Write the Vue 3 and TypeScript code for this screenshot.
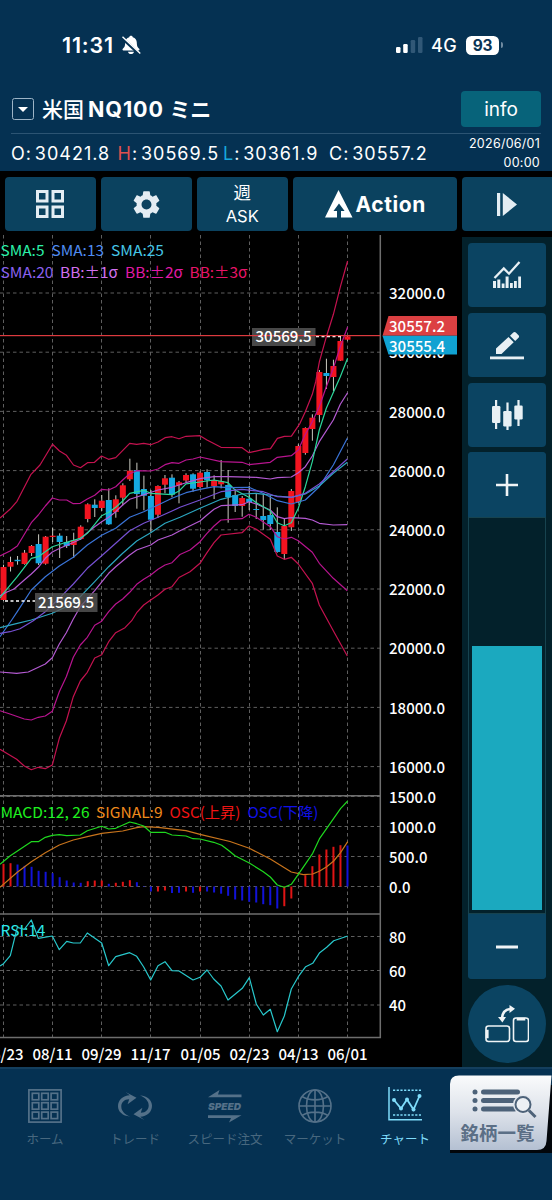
<script setup lang="ts">
type Candle = [up: 0 | 1, high: number, top: number, bottom: number, low: number]
interface Legend { text: string; x: number; y: number; w: number; color: string }

const STEP = 7.02
const xAt = (i: number): number => 3.5 + i * STEP

const candles: Candle[] = [
  [1, 564.7, 567, 600, 601], [1, 556.7, 562, 566.7, 571.5], [0, 556, 559.8, 561.2, 564.7], [1, 550, 552.7, 564, 564.7],
  [1, 545, 546, 553, 556], [0, 534.3, 544, 563.3, 565], [1, 536, 536.7, 563.7, 564.7], [1, 527.7, 535.7, 537, 542],
  [0, 533.3, 535.7, 542, 558], [0, 536, 542, 546, 548], [1, 532.7, 540, 545, 558], [1, 525.3, 526.7, 539, 540],
  [1, 503.3, 504.3, 519, 522.3], [0, 499.3, 504.7, 508, 517], [1, 495, 500.7, 508, 511], [0, 488.3, 500, 524.3, 525],
  [1, 495.3, 499.3, 512, 517.7], [1, 483.3, 485.3, 497.7, 505.3], [1, 458.7, 470.7, 479.3, 481], [0, 462.7, 470, 494, 508.7],
  [0, 475.7, 489, 495.7, 510.3], [0, 490, 496, 519.7, 532.7], [1, 485.3, 486, 514.7, 518], [1, 475, 478.3, 484.7, 493.3],
  [0, 474.3, 477.7, 494.7, 497.3], [1, 481, 482.3, 485.3, 503.3], [1, 473.3, 475, 480.5, 482.7], [0, 473.3, 474.3, 488.7, 491.7],
  [1, 471.3, 472.7, 487, 488.3], [0, 469.3, 472, 480.3, 487.7], [1, 475.3, 480, 486, 499], [1, 460, 481, 484.3, 488.3],
  [0, 470, 485, 497, 522.7], [0, 489, 495, 506, 512], [1, 496, 498, 506, 516.7], [0, 486, 498.7, 502, 510],
  [0, 494, 509, 510, 519], [0, 494.3, 516, 520, 529.7], [0, 495.3, 515, 524, 530], [0, 507.3, 532, 552, 552.7],
  [1, 518.3, 526, 554, 559.3], [1, 489, 491, 527.3, 531], [1, 444.3, 446, 502, 502.7], [1, 427.3, 428, 453, 454.7],
  [1, 414.3, 417.7, 429, 440.7], [1, 370, 372, 415, 422.3], [0, 358.7, 373, 376, 389], [1, 359.7, 366, 377, 391],
  [1, 336.3, 341, 360.7, 361], [1, 335.7, 336.3, 339.7, 340.7],
]

const curves: { color: string; points: string }[] = [
  { color: '#c4124f', points: '0,518 10,509.3 17,501.3 31,474.3 40,465 52.5,444.3 59.5,451 66.5,455.3 73.5,465 80.5,467.7 87.5,462.7 94.5,462.3 101.5,456 108.5,459.3 115.7,457.7 129.7,443.3 136.7,444.3 143.7,443.3 150.7,444.7 158,442 165,437.7 172,436.7 179,438.8 186,436.3 200,435.7 207,440 221,447.3 242,447.7 249,452.7 263.5,449.3 270.5,448.7 277.4,438.3 284.4,436.3 291.4,436.2 300,423.3 305.3,411.7 312.3,394.3 315.7,381.7 319.4,361.7 326.4,336.7 333.4,314.3 340.4,286.7 347.6,261' },
  { color: '#c4124f', points: '0,749.3 16.7,759.3 24.3,766 31.3,769.7 38.3,767.3 45.3,768.7 52.3,765 59.3,738.3 66.3,721 73.3,696.7 80.3,681 87.3,672.3 94.7,658 101.7,654.7 108.7,641.7 115.7,632.7 125,627.7 131.7,620.7 136.7,612.7 143.7,605 150.7,600 158,595 165,589.3 172,586.7 179,577.5 190,571.7 200,563.3 207,552.7 214,542.7 221,535 242,532.7 249,526 256.3,529.3 270.3,539.3 277.3,556 284.3,559.3 291.3,557.3 298.3,564 312.3,583.3 319.3,605 333.3,630.7 347.3,656' },
  { color: '#b8148f', points: '0,556 10,551 17.3,546 31.3,522.7 38.3,515 45.3,506 52.3,498 59.3,500 66.7,500 73.3,503.7 80.3,503.3 87.3,499 94.7,495.3 101.7,489.3 108.7,490 115.7,486.7 122.7,480 129.7,473.7 136.7,470.7 150.7,471 158,469 165,464.7 172,462.7 179,463.3 186,460 193,459 200,457 221,461.7 242,462.3 249,464.7 270.3,462.3 277.3,457.3 291.3,455.7 298.3,450 305,435 312.3,421.7 319.3,406.7 326.3,386.7 333.3,368.3 340.3,346.7 347.6,327' },
  { color: '#b8148f', points: '0,710.7 10,714 24.3,719 31.3,720 38.3,717.3 45.3,716 52.3,711.3 59.3,691.7 66.3,676.7 73.3,657.3 80.3,645 87.3,637.3 94.7,625.3 101.7,621.2 108.7,611.7 115.7,604 122.7,599 129.7,592.3 136.7,584.3 143.7,579.3 150.7,575 158,569.3 165,565 172,562.7 180,554.5 190,550 200,541.7 207,533.3 214,526 221,520 242,518.7 249,514.3 256.3,517.3 270.3,526.7 277.3,536.7 284.3,539 291.3,537.3 298.3,540.7 312.3,552.3 319.3,563.3 333.3,578.3 347.3,590.7' },
  { color: '#b45ad2', points: '0,595.7 7,592 14,589 24.3,580 31.3,574 38.3,567.3 45.3,558.3 52.3,552 59.3,548.5 66.3,545.5 73.3,542.5 80.3,539.3 87.3,532.7 94.7,526.7 101.7,521.7 108.7,517.3 115.7,511.7 122.7,505 129.7,499.3 143.7,494.7 158,490 172,487.3 186,482.7 193,480.7 200,478.7 214,476.7 228,476.7 256.3,477.3 270.3,479 277.3,477.7 291.3,477 298.3,472.7 305.3,466.7 312.3,456 319.3,441.7 333.3,420 340.3,404.3 347.6,392.7' },
  { color: '#b45ad2', points: '0,672 16.7,673.3 28.3,672 45.3,664 52.3,657.7 59.3,644 66.3,632.7 73.3,619 80.3,606.7 94.7,590.7 108.7,573.3 115.7,566.7 129.7,555 136.7,550 150.7,545 158,540 172,535 180,530.7 200,521 207,515 214,509.3 221,505.7 242,504.7 249,501.7 256.3,504 270.3,510 277.3,516.7 284.3,518.7 291.3,517.7 305.3,518.3 312.3,520 319.3,523.3 333.3,525 347.3,524.7' },
  { color: '#2bd69a', points: '0,598 3.3,593.3 17.3,576.7 31.3,558.3 38.3,556.7 52.3,546.7 66.3,542.3 80.3,538.3 87.3,533.3 94.7,524.3 101.7,515.7 108.7,512.3 115.7,507.3 122.7,501 129.7,493.3 143.7,490.3 150.7,493.3 172,494.7 179,491 186,483.8 200,482 214,480 228,482.7 235,490 249,497.3 256.3,502.7 270.3,510.7 277.3,522.7 284.3,525.7 291.3,522.7 298.3,508.3 305.3,486.7 312.3,461.7 319.3,430 326.3,408.3 340.3,376.7 347.6,358.3' },
  { color: '#3a74d8', points: '0,636.7 11.7,620 17.3,611.7 31.3,590 45.3,576.7 59.3,566 73.3,557.3 87.3,545 101.7,535.3 115.7,528.3 129.7,517.3 143.7,511.7 158,505 172,498.3 186,492.7 200,489.3 214,486.7 228,487.7 249,487.3 263,493.3 277.3,500.7 291.3,504 305.3,500 319.3,486.7 333.3,465 347.3,438.3' },
  { color: '#2ba6c0', points: '0,627.7 17.3,623.3 31.3,620 52.3,613.3 66.3,606.7 80.3,596.7 94.7,581.7 108.7,566.7 122.7,553.3 136.7,541 150.7,532.7 165,523.3 180,517.3 200,508.3 221,499.3 242,494 256.3,493.3 277.3,496 291.3,497.3 305.3,494 319.3,486 333.3,473.3 347.3,462.3' },
  { color: '#7650d2', points: '0,633.3 10,631.7 20,628.7 33.3,620.7 45.3,611.7 59.3,598.3 73.3,584 87.3,568.3 101.7,555.7 115.7,543.3 129.7,530.7 143.7,523.3 158,517.3 172,511 180,507.3 200,500 221,491.7 242,489.3 263.3,491.7 277.3,496.7 291.3,497.3 305.3,493.3 319.3,484 333.3,471.7 347.3,459' },
]

const macd = '0,864.3 10.3,855.7 31.3,841.7 38.3,841.7 45.3,837.3 52.3,835.3 59.3,834.7 66.7,835.7 80.3,835 87.3,830.7 101.7,826.3 108.7,829 115.7,828.3 129.7,822 136.7,823.7 143.7,826 150.7,832.3 165,832.3 172,835 186,836 193,838.7 200,839 213.7,842.3 221.7,845.3 228,850 235,855.7 249.3,863 263.3,871.7 270.3,877 277.3,885 284.3,887.3 291.3,884.3 298.3,874.3 312.7,853.3 319.7,838.3 326.7,828.3 340.7,808.3 347.7,801'
const signal = '0,887.3 17.3,872.3 31.3,861.7 45.3,852.7 59.3,845 73.3,840 87.3,836.7 101.7,833.3 122.7,831 136.7,827.7 143.7,826.7 158,827.3 186,830.7 200,834.3 230,841.5 249.3,848.3 270.3,859 291.3,872 303.3,874.7 312.7,874 319.7,871 326.7,866.7 333.7,861 340.7,852.3 347.7,841.7'
const rsi = '0,966 3.5,963.7 10.3,955.7 15,936.7 17.3,927.3 24.3,929.3 31.3,920 38.3,938.3 52.3,936 59.3,949.7 66.7,941.3 73.3,943 80.3,943 87.3,933 101.7,943 108.7,965.7 115.7,956.7 129.7,952.7 136.7,956.3 143.7,967 150.7,980 158,965.7 165,961.7 172,970.7 179,971 193,980 200,977.3 207,970 213.7,979 221,986 228,1000 242.3,988.3 249.3,977.7 256.3,1004 263.3,1015 270.3,1009.3 277.3,1031.7 284.3,1016 291.3,989 298.3,976.7 305.7,966.7 312.7,963.3 319.7,952.7 326.7,947.3 333.7,940.7 347.7,936'

const oscillator: [rising: 0 | 1, value: number][] = [
  [1, 22.7], [1, 23.3], [0, 22], [0, 20.7], [0, 19.7], [0, 15.7], [0, 14.7], [0, 13.3], [0, 9.3], [0, 6],
  [0, 4], [0, 3.7], [1, 5.3], [1, 6], [1, 6], [0, 2.7], [1, 3.7], [1, 4.7], [1, 6.3], [0, 4.3],
  [0, 0.5], [0, -5], [1, -5], [1, -4], [0, -6.5], [0, -6.3], [1, -5], [0, -6.3], [1, -5], [0, -5],
  [0, -6], [0, -7.2], [0, -9.3], [0, -13], [0, -14], [0, -15.3], [0, -16], [0, -17.7], [0, -18.7], [0, -22],
  [1, -19.7], [1, -12], [1, 0], [1, 11.3], [1, 20.3], [1, 32], [1, 37], [1, 39.7], [1, 41.3], [0, 41],
]

const gridX = [3.5, 52.5, 101.5, 150.5, 200.5, 249.5, 298.5, 347.5]
const dates = ['06/23', '08/11', '09/29', '11/17', '01/05', '02/23', '04/13', '06/01']
const scale: { y: number; text: string; w: number }[] = [
  { y: 293, text: '32000.0', w: 56 }, { y: 352.2, text: '30000.0', w: 56 }, { y: 411.4, text: '28000.0', w: 56 },
  { y: 470.6, text: '26000.0', w: 56 }, { y: 529.8, text: '24000.0', w: 56 }, { y: 589, text: '22000.0', w: 56 },
  { y: 648.2, text: '20000.0', w: 56 }, { y: 707.4, text: '18000.0', w: 56 }, { y: 766.6, text: '16000.0', w: 56 },
  { y: 796.5, text: '1500.0', w: 47 }, { y: 826.5, text: '1000.0', w: 47 }, { y: 856.5, text: '500.0', w: 38.5 },
  { y: 886.5, text: '0.0', w: 21.5 }, { y: 936.5, text: '80', w: 17 }, { y: 970.5, text: '60', w: 17 }, { y: 1005, text: '40', w: 17 },
]

const legends: Legend[] = [
  { text: 'SMA:5', x: 0.5, y: 256.3, w: 44, color: '#2cf0a8' },
  { text: 'SMA:13', x: 51.5, y: 256.3, w: 52.5, color: '#4f8cf2' },
  { text: 'SMA:25', x: 111, y: 256.3, w: 53, color: '#45c6e6' },
  { text: 'SMA:20', x: 0.5, y: 278.3, w: 53, color: '#8a60ee' },
  { text: 'BB:±1σ', x: 60, y: 278.3, w: 58, color: '#d270ee' },
  { text: 'BB:±2σ', x: 125, y: 278.3, w: 58, color: '#e01aa6' },
  { text: 'BB:±3σ', x: 189.5, y: 278.3, w: 58, color: '#e81468' },
  { text: 'MACD:12, 26', x: 0.5, y: 818, w: 89, color: '#1ff01f' },
  { text: 'SIGNAL:9', x: 96, y: 818, w: 66.5, color: '#f08a1c' },
  { text: 'OSC(上昇)', x: 169.5, y: 818, w: 71, color: '#f01414' },
  { text: 'OSC(下降)', x: 247.5, y: 818, w: 71, color: '#1010e8' },
  { text: 'RSI:14', x: 0.5, y: 935.8, w: 45, color: '#2ce8e8' },
]
const squares = [0, 1, 2, 3, 4, 5, 6, 7, 8]
</script>

<template>
  <div class="screen">
    <header class="top">
      <div class="status">
        <span class="clock">11:31</span>
        <svg class="bell" width="20" height="20" viewBox="0 0 20 20">
          <path d="M10 .8c-1 0-1.6.6-1.8 1.4C5.600 3 4.300 5 4.200 7.500c-.1 4-1 5-2.400 6.300-.6.7-.3 1.700.6 1.700h15.200c.9 0 1.200-1 .6-1.700-1.400-1.300-2.300-2.300-2.400-6.300-.1-2.500-1.400-4.500-4-5.300C11.600 1.400 11 .8 10 .8zM7 16.700c.3 1.400 1.500 2.300 3 2.300s2.700-.9 3-2.300z" fill="#fff" />
          <path d="M.5 2.300 18.500 19.300" stroke="#053152" stroke-width="3" />
          <path d="M1.500 1.700 19.300 18.500" stroke="#fff" stroke-width="1.400" />
        </svg>
        <svg class="signal" width="27" height="18" viewBox="0 0 27 18">
          <rect x="0" y="11" width="4.500" height="6" rx="1.200" fill="#fff" />
          <rect x="7.200" y="8" width="4.500" height="9" rx="1.200" fill="#fff" />
          <rect x="14.700" y="4" width="4.500" height="13" rx="1.200" fill="#315877" />
          <rect x="22" y="1" width="4.500" height="16" rx="1.200" fill="#315877" />
        </svg>
        <span class="network">4G</span>
        <span class="battery">93</span><i class="nub"></i>
      </div>
      <div class="title-row">
        <span class="drop"><i></i></span>
        <h1><span class="kanji">米国</span><span class="latin">NQ100</span><span class="kana">ミニ</span></h1>
        <button class="info">info</button>
      </div>
      <div class="quote">
        <span class="o">O: 30421.8</span>
        <span class="h"><b>H</b>: 30569.5</span>
        <span class="l"><b>L</b>: 30361.9</span>
        <span class="c">C: 30557.2</span>
        <div class="stamp"><span>2026/06/01</span><span>00:00</span></div>
      </div>
    </header>

    <div class="toolbar">
      <button class="tool">
        <svg width="28" height="28" viewBox="0 0 28 28" fill="none" stroke="#e4edf3" stroke-width="3">
          <rect x="1.500" y="1.500" width="9.500" height="9.500" /><rect x="17" y="1.500" width="9.500" height="9.500" />
          <rect x="1.500" y="17" width="9.500" height="9.500" /><rect x="17" y="17" width="9.500" height="9.500" />
        </svg>
      </button>
      <button class="tool">
        <svg width="33" height="33" viewBox="0 0 24 24" fill="#e4edf3">
          <path d="M19.140 12.940c.04-.3.06-.61.06-.94 0-.32-.02-.64-.07-.94l2.030-1.580c.18-.14.23-.41.12-.61l-1.920-3.320c-.12-.22-.37-.29-.59-.22l-2.390.96c-.5-.38-1.030-.7-1.620-.94l-.36-2.540c-.04-.24-.24-.41-.48-.41h-3.840c-.24 0-.43.17-.47.41l-.36 2.540c-.59.24-1.130.57-1.620.94l-2.390-.96c-.22-.08-.47 0-.59.22L2.740 8.870c-.12.21-.08.47.12.61l2.030 1.580c-.05.3-.09.63-.09.94s.02.64.07.94l-2.030 1.580c-.18.14-.23.41-.12.61l1.920 3.320c.12.22.37.29.59.22l2.390-.96c.5.38 1.030.7 1.620.94l.36 2.540c.05.24.24.41.48.41h3.840c.24 0 .44-.17.47-.41l.36-2.540c.59-.24 1.130-.56 1.620-.94l2.390.96c.22.08.47 0 .59-.22l1.920-3.320c.12-.22.07-.47-.12-.61l-2.010-1.580zM12 15.600c-1.980 0-3.600-1.620-3.600-3.600s1.620-3.600 3.600-3.600 3.600 1.620 3.600 3.600-1.620 3.600-3.600 3.600z" />
        </svg>
      </button>
      <button class="tool stacked"><span>週</span><span>ASK</span></button>
      <button class="tool action">
        <svg width="28" height="28" viewBox="0 0 28 28"><path d="M13.500 0 27.500 27.500H16V21h3.600l-5.600-7.500L8.500 21H12v6.500H0z" fill="#fff" /></svg>
        <span>Action</span>
      </button>
      <button class="tool last">
        <svg width="20" height="23" viewBox="0 0 20 23"><path d="M0 0h3.200v23H0zM5.800 0 20 11.500 5.800 23z" fill="#e4edf3" /></svg>
      </button>
    </div>

    <main class="body">
      <svg class="chart" width="460" height="832" viewBox="0 235 460 832">
        <g class="grid">
          <line v-for="x in gridX" :key="x" :x1="x" :x2="x" y1="235" y2="1037" />
          <line v-for="s in scale" :key="s.y" x1="0" x2="380" :y1="s.y" :y2="s.y" />
        </g>
        <g class="frame">
          <line x1="380.300" x2="380.300" y1="235" y2="1038" />
          <line x1="0" x2="381" y1="795.800" y2="795.800" />
          <line x1="0" x2="381" y1="914" y2="914" />
          <line x1="0" x2="381" y1="1037.500" y2="1037.500" />
        </g>
        <g v-for="(c, i) in candles" :key="i">
          <rect :x="xAt(i) - 0.5" :y="c[1]" width="1" :height="c[4] - c[1]" fill="#c9c9c0" />
          <rect :x="xAt(i) - 3" :y="c[2]" width="6" :height="c[3] - c[2]" :fill="c[0] ? '#f21420' : '#14a8e2'" />
        </g>
        <polyline v-for="(c, i) in curves" :key="'l' + i" class="curve" :points="c.points" :stroke="c.color" />
        <template v-for="(b, i) in oscillator" :key="'o' + i">
          <rect :x="xAt(i) - 1" :y="b[1] > 0 ? 886.5 - b[1] : 886.5" width="2" :height="Math.abs(b[1])" :fill="b[0] ? '#e01414' : '#1212d8'" />
        </template>
        <polyline class="curve" :points="signal" stroke="#c8741c" />
        <polyline class="curve" :points="macd" stroke="#1fd81f" />
        <text v-for="l in legends" :key="l.text" class="legend" :x="l.x" :y="l.y" :textLength="l.w" lengthAdjust="spacingAndGlyphs" :fill="l.color">{{ l.text }}</text>
        <polyline class="curve" :points="rsi" stroke="#28c8cc" />

        <rect x="35" y="593" width="62.500" height="19" fill="#5a5a5a" opacity=".78" />
        <text class="num" x="38" y="607.500" textLength="56" lengthAdjust="spacingAndGlyphs">21569.5</text>
        <path d="M5 601h30M316 336.500h25" stroke="#fff" stroke-width="1.300" stroke-dasharray="3 2.500" />
        <rect x="252" y="328" width="63.500" height="18" fill="#484848" />
        <rect x="0" y="335" width="380" height="1.200" fill="#dc3a3e" />
        <text class="num" x="255.500" y="342.300" textLength="56" lengthAdjust="spacingAndGlyphs">30569.5</text>

        <text v-for="s in scale" :key="s.text" class="num" x="389" :y="s.y + 6.2" :textLength="s.w" lengthAdjust="spacingAndGlyphs">{{ s.text }}</text>
        <text v-for="(d, i) in dates" :key="d" class="num" :x="gridX[i] - 20" y="1059.500" textLength="40" lengthAdjust="spacingAndGlyphs">{{ d }}</text>
        <path d="M382.500 335.800 388.500 316H457v19.800z" fill="#dc4042" />
        <path d="M382.500 335.800 388.500 354.500H457V335.800z" fill="#10a2d2" />
        <text class="num" x="389" y="332.200" textLength="56" lengthAdjust="spacingAndGlyphs">30557.2</text>
        <text class="num" x="389" y="351.600" textLength="56" lengthAdjust="spacingAndGlyphs">30555.4</text>
      </svg>

      <aside class="side">
        <button class="key">
          <svg width="28" height="28" viewBox="0 0 28 28">
            <path d="M1.500 17 10.800 7.500l5.200 5.200L26.500 1" fill="none" stroke="#e8f0f4" stroke-width="2.300" />
            <path d="M0 20h3v7H0zM4.300 18.500h3V27h-3zM8.700 22.500h2.800V27H8.700zM12.600 15.500h3V27h-3zM17 22h2.800v5H17zM21 20h2.800v7H21zM25.200 15.500H28V27h-2.800z" fill="#e8f0f4" />
          </svg>
        </button>
        <button class="key">
          <svg width="34" height="30" viewBox="0 0 34 30" fill="#e8f0f4">
            <path d="M6 18.500 18.500 7l5.200 5.200L11.500 24H6zM20 5.700l3.300-3.200c.8-.8 1.700-.8 2.500 0L28.500 5.200c.8.8.8 1.700 0 2.500L25.200 11z" />
            <rect x="0" y="26.500" width="34" height="2.800" />
          </svg>
        </button>
        <button class="key candle-key">
          <svg width="31" height="31" viewBox="0 0 31 31" fill="#e8f0f4">
            <rect x="3" y="1" width="2.200" height="29" /><rect x="0" y="7" width="8.400" height="17" rx="1.200" />
            <rect x="14.400" y="3.500" width="2.200" height="27.500" /><rect x="11.200" y="12" width="8.400" height="15.500" rx="1.200" />
            <rect x="25.400" y="1" width="2.200" height="26" /><rect x="22.300" y="6.500" width="8.400" height="14" rx="1.200" />
          </svg>
        </button>
        <div class="zoom">
          <button class="step"><svg width="22" height="22"><path d="M0 11h22M11 0v22" stroke="#f0f4f6" stroke-width="2.600" /></svg></button>
          <div class="gauge"><div class="level"></div></div>
          <button class="step"><svg width="22" height="22"><path d="M0 11h22" stroke="#f0f4f6" stroke-width="2.800" /></svg></button>
        </div>
        <button class="rotate">
          <svg width="44" height="38" viewBox="0 0 44 38" fill="none" stroke="#f0f4f6" stroke-width="1.600">
            <rect x="1" y="21" width="23.500" height="15.500" rx="2.500" /><rect x="28.500" y="13" width="15" height="23.500" rx="2.500" />
            <path d="M32.500 13.500h7v1.300h-7zM1.500 25.500h1.300v7H1.500z" fill="#f0f4f6" />
            <path d="M17 13c.5-5 3.500-8.500 8-9" stroke-width="2.600" />
            <path d="M24.500 0 30 3.800 24.500 8zM13 12h8l-3.600 5.500z" fill="#f0f4f6" stroke="none" />
          </svg>
        </button>
      </aside>
    </main>

    <nav class="nav">
      <a class="item">
        <svg width="34" height="34" viewBox="0 0 34 34" fill="none" stroke="#547189" stroke-width="1.700">
          <rect x=".9" y=".9" width="32.200" height="32.200" />
          <rect v-for="n in squares" :key="n" :x="4.3 + (n % 3) * 9.4" :y="4.3 + Math.floor(n / 3) * 9.4" width="6.500" height="6.500" />
        </svg>
        <span>ホーム</span>
      </a>
      <a class="item">
        <svg width="34" height="34" viewBox="0 0 34 34" fill="#547189">
          <path d="M12 27.500C4.500 27 0 22.500 0 17.300 0 11 5 6.500 11.800 6.300L7.600 3 18.500 8.800 9.600 15.200l1.600-5C6 10.300 3.300 13.500 3.300 17.500c0 4.500 3.500 8 8.700 10z" />
          <path d="M22 6.500c7.500.5 12 5 12 10.200 0 6.300-5 10.800-11.800 11l4.200 3.300L15.500 25.200l8.900-6.400-1.600 5c5.200-.1 7.900-3.300 7.900-7.300 0-4.500-3.500-8-8.700-10z" />
        </svg>
        <span>トレード</span>
      </a>
      <a class="item">
        <svg width="34" height="34" viewBox="0 0 34 34" fill="#547189">
          <path d="M0 8.200 11.500 1 10 5.500H33.500v2.700zM33.500 26.300 21 33.500l2-4.500H0v-2.700z" />
          <text x="0" y="20.600" font-family="Inter, sans-serif" font-size="9.600" font-weight="900" font-style="italic" textLength="33" lengthAdjust="spacingAndGlyphs">SPEED</text>
        </svg>
        <span>スピード注文</span>
      </a>
      <a class="item">
        <svg width="34" height="34" viewBox="0 0 34 34" fill="none" stroke="#547189" stroke-width="1.600">
          <circle cx="17" cy="17" r="16" /><ellipse cx="17" cy="17" rx="8.500" ry="16" />
          <path d="M17 1v32M1 17h32M4 7.500c7.500 4.500 18.500 4.500 26 0M4 26.500c7.500-4.500 18.500-4.500 26 0" />
        </svg>
        <span>マーケット</span>
      </a>
      <a class="item active">
        <svg width="34" height="34" viewBox="0 0 34 34" fill="none" stroke="#7fdcfa" stroke-width="1.500">
          <path d="M1 0v32.800H34" /><path d="M5 3.200h28M5 28h28" stroke-dasharray="2.200 1.500" />
          <path d="M6 13l7 8.500 6-9 6.500 10L31.500 9" stroke-width="1.800" />
          <g fill="#7fdcfa" stroke="none"><circle cx="6" cy="13" r="2" /><circle cx="13" cy="21.500" r="2" /><circle cx="19" cy="12.500" r="2" /><circle cx="25.500" cy="22.500" r="2" /><circle cx="31.500" cy="9" r="2" /></g>
        </svg>
        <span>チャート</span>
      </a>
      <div class="list-slot">
        <svg width="102" height="78" viewBox="0 0 102 78">
          <defs><linearGradient id="sheet" x1="0" y1="0" x2="0" y2="1"><stop offset="0" stop-color="#fafbfc" /><stop offset=".5" stop-color="#dde2ea" /><stop offset="1" stop-color="#b4c0d2" /></linearGradient></defs>
          <path d="M0 30 40 10H102V78H0z" fill="#02060b" />
          <path d="M9 .5H101.500L96.500 66Q96 75 87 75H0V9Q0 .5 9 .5z" fill="url(#sheet)" />
          <g fill="#4d6279">
            <circle cx="25" cy="17" r="2.500" /><circle cx="25" cy="25.500" r="2.500" /><circle cx="25" cy="34" r="2.500" />
            <rect x="31" y="14.500" width="39" height="5" rx="2.500" /><rect x="31" y="23" width="36" height="5" rx="2.500" /><rect x="31" y="31.500" width="36" height="5" rx="2.500" />
          </g>
          <circle cx="73" cy="29.500" r="10" fill="#e3e7ee" /><circle cx="73" cy="29.500" r="7.500" fill="#edf0f4" stroke="#4d6279" stroke-width="2" />
          <path d="M79 35.500 85.500 42" stroke="#4d6279" stroke-width="3" />
          <text x="10.500" y="64.500" textLength="74" lengthAdjust="spacingAndGlyphs" font-family="'Noto Sans CJK JP', sans-serif" font-size="18.500" font-weight="700" fill="#5b6f86">銘柄一覧</text>
        </svg>
      </div>
    </nav>
  </div>
</template>

<style>
html, body { margin: 0; background: #000; }
</style>

<style scoped>
.screen { width: 552px; height: 1200px; overflow: hidden; background: #000; color: #fff; font-family: Inter, 'Noto Sans CJK JP', sans-serif; }
button { border: 0; padding: 0; margin: 0; color: #fff; font: inherit; display: flex; align-items: center; justify-content: center; }
.top { height: 171px; background: #053152; overflow: hidden; }
.status { display: flex; align-items: center; height: 90px; padding-left: 62px; box-sizing: border-box; }
.clock { font-size: 21.5px; font-weight: 600; width: 59px; letter-spacing: .8px; }
.signal { margin-left: 255px; }
.network { font-size: 18px; font-weight: 500; margin-left: 8px; width: 35px; letter-spacing: .4px; }
.battery { width: 33px; height: 19px; border-radius: 5.5px; background: #fff; color: #0a3454; font-size: 15.5px; font-weight: 700; line-height: 19px; text-align: center; letter-spacing: -.2px; }
.nub { width: 2px; height: 6px; margin-left: 1.5px; border-radius: 0 3px 3px 0; background: #6f8aa0; }
.title-row { display: flex; align-items: center; height: 38px; padding: 0 11px 0 12px; }
.drop { width: 20px; height: 20px; border: 1.5px solid #9db4c6; border-radius: 2.5px; display: flex; align-items: center; justify-content: center; }
.drop i { border: 5px solid transparent; border-top: 5.5px solid #fff; border-bottom: 0; }
h1 { margin: 0 auto 0 8px; font-size: 21px; font-weight: 700; display: flex; align-items: baseline; line-height: 30px; white-space: nowrap; }
.kanji { width: 46px; font-weight: 500; }
.latin { width: 81.5px; font-size: 21.5px; letter-spacing: .9px; }
.kana { letter-spacing: -.2px; }
.info { width: 80px; height: 36px; border-radius: 4px; background: #07637a; font-size: 19px; }
.quote { display: flex; height: 38px; margin: 5px 11px 0; border-top: 1px solid #2c5473; font-size: 18px; line-height: 39px; letter-spacing: 1px; word-spacing: -3.2px; white-space: nowrap; }
.quote b { font-weight: 400; color: #e0504f; }
.quote .l b { color: #18a8dc; }
.o { width: 106.5px; }
.h { width: 105.5px; }
.l { width: 106px; }
.c { width: 110px; }
.stamp { margin-left: auto; display: flex; flex-direction: column; align-items: flex-end; font-size: 12.5px; line-height: 18.5px; padding: 1px 1px 0 0; letter-spacing: .25px; }
.toolbar { display: flex; gap: 6px; height: 64px; padding: 6px 0 4px 5px; box-sizing: border-box; }
.tool { width: 90.5px; height: 54px; flex: none; border-radius: 4px; background: #0b425f; margin-right: -.5px; }
.stacked { flex-direction: column; font-size: 17.5px; line-height: 22px; }
.stacked span + span { font-size: 16.5px; padding-top: 1px; }
.action { width: 163.5px; gap: 3px; padding-left: 1px; box-sizing: border-box; font-size: 21px; font-weight: 700; letter-spacing: .6px; }
.last { border-radius: 4px 0 0 4px; }
.body { display: flex; height: 832px; }
.chart { display: block; flex: none; margin-right: 2px; }
.grid line { stroke: #5e5e5e; stroke-width: 1; stroke-dasharray: 3.5 3; }
.frame line { stroke: #6e6e6e; stroke-width: 1.5; }
.curve { fill: none; stroke-width: 1.2; stroke-linejoin: round; }
.legend { font-family: 'Noto Sans CJK JP', sans-serif; font-size: 15px; }
.num { font-family: 'Noto Sans CJK JP', sans-serif; font-size: 15.5px; font-weight: 500; fill: #fff; }
.side { width: 90px; margin-top: 2px; padding: 6px; box-sizing: border-box; background: #03212b; display: flex; flex-direction: column; gap: 6px; }
.key { width: 78px; height: 64px; flex: none; border-radius: 4px; background: #0b4462; }
.candle-key { padding-bottom: 2px; box-sizing: border-box; }
.zoom { display: flex; flex-direction: column; height: 527px; flex: none; margin-top: -1px; border-radius: 4px; overflow: hidden; background: #0b4462; }
.step { height: 65px; flex: none; background: #0b4462; }
.gauge { flex: 1; border: 1px solid #17434f; padding: 3px; background: #03212b; display: flex; align-items: flex-end; }
.level { width: 100%; height: 264px; background: #1ba9bf; }
.rotate { width: 78px; height: 78px; flex: none; border-radius: 50%; background: #0b4462; }
.nav { display: flex; height: 133px; background: #053152; border-top: 2px solid #143f5e; box-sizing: border-box; }
.item { width: 90px; padding-top: 20px; display: flex; flex-direction: column; align-items: center; color: #48687f; font-size: 12.5px; font-family: 'Noto Sans CJK JP', sans-serif; line-height: 18px; gap: 7px; white-space: nowrap; }
.item svg { display: block; }
.active { color: #7fdcfa; }
.active svg { margin: -2px 0 2px; }
.list-slot { width: 102px; padding-top: 6px; }
</style>
